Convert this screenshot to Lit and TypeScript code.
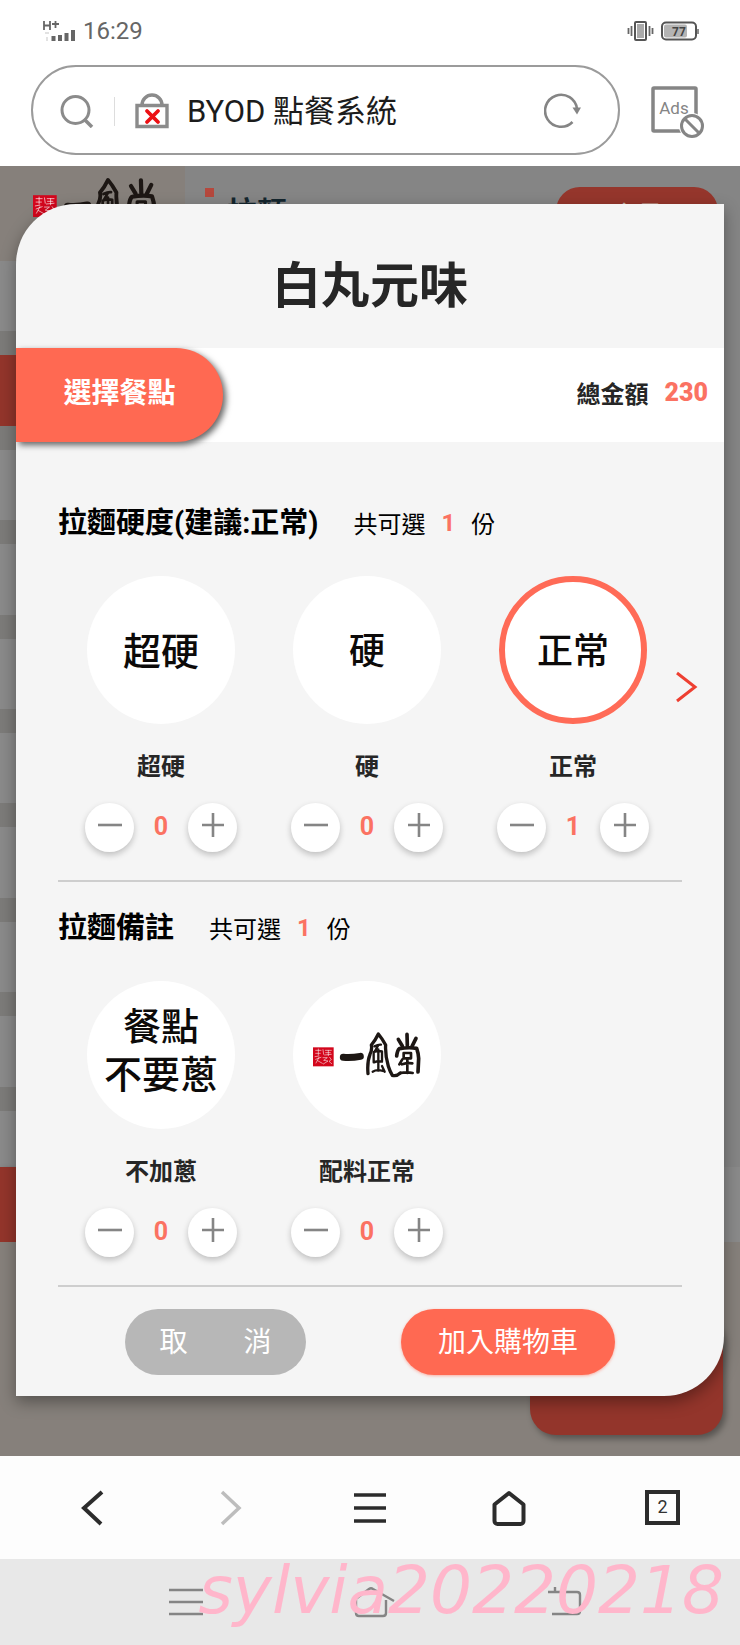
import { LitElement, html, css, svg, nothing } from "lit";
import { customElement, property, state } from "lit/decorators.js";
import { classMap } from "lit/directives/class-map.js";

const brandLogo = html`<svg viewBox="36 36 324 138" aria-label="一風堂" role="img">
  <rect x="36" y="82" width="62" height="57" fill="#d3061c" />
  <g fill="none" stroke="#fff" stroke-opacity="0.7" stroke-width="2.400" stroke-linecap="round">
    <path d="M44 91h16M52 87v18M44 100h14M66 89l2 14M73 91h18M74 98h14M82 91v16M71 105l20-2" />
    <path d="M42 110l12-2M44 118l16-6M54 112l-9 17M50 122l14 8M66 113h13l-11 8 13 2-14 9M86 112l5 7-7 5 8 7" />
  </g>
  <g fill="none" stroke="#1d1714" stroke-linecap="round" stroke-linejoin="round">
    <path d="M127 112q26 2 51-3" stroke-width="21" />
    <path d="M201 161q-3-36 6-58 7-14 4-28 12-14 21-33 11 13 22 33-2 30 8 64 5 16 12 27 12 4 24-7" stroke-width="10" />
    <path d="M220 79q12-6 20-5M231 77l-9 16M218 96v31M219 96q13-5 24-2v30M219 127q12-5 24-2M232 88v64M215 155q13-8 31-2M243 138l8 17" stroke-width="7" />
    <path d="M318 43l1 34M292 58l12 20M345 55l-12 24" stroke-width="11" />
    <path d="M287 108q2-17 8-22 28-5 52-1 5 14 6 30l-2 41" stroke-width="11" />
    <path d="M308 99h22v16h-22zM319 117v42M303 133q16-5 31-3M297 159q22-4 38 0M304 118l-9 15" stroke-width="8" />
  </g>
</svg>`;

const icons = {
  minus: svg`<svg viewBox="0 0 24 24"><path d="M0 12h24" stroke="#858585" stroke-width="2.600" /></svg>`,
  plus: svg`<svg viewBox="0 0 24 24"><path d="M1 12h22M12 0v24" stroke="#858585" stroke-width="2.600" /></svg>`,
  next: svg`<svg viewBox="0 0 22 32"><path d="M1 2l18 14L1 30" fill="none" stroke="#ee3f31" stroke-width="3" /></svg>`,
};

interface Choice {
  label: string;
  lines?: string[];
  compact?: boolean;
  count: number;
}

@customElement("menu-choice")
class MenuChoice extends LitElement {
  @property({ attribute: false }) choice!: Choice;

  static styles = css`
    :host { display: flex; flex-direction: column; align-items: center; }
    .disc {
      box-sizing: border-box; width: 148px; height: 148px; padding: 4px 0 0;
      display: flex; flex-direction: column; align-items: center; justify-content: center;
      border: 0; border-radius: 50%; background: #fff; color: #0c0a09;
      font: 500 38px/48px Roboto, "Noto Sans CJK TC", sans-serif;
    }
    .disc.compact { font-size: 36px; }
    .disc.stacked { padding: 0 0 8px; }
    .disc.brand { padding: 0; }
    .disc.selected { border: 6px solid #ff6b57; }
    .disc svg { width: 108px; height: 46px; }
    .name { margin: 23px 0 20px; font-size: 24px; line-height: 36px; font-weight: 700; color: #262626; }
    .stepper { display: flex; align-items: center; }
    .step {
      width: 49px; height: 49px; padding: 0 0 5px; border: 0; border-radius: 50%;
      display: grid; place-items: center; background: #fff;
      box-shadow: 0 3px 6px rgba(0, 0, 0, 0.22);
    }
    .step svg { width: 24px; height: 24px; }
    .count { width: 54px; padding-bottom: 2px; text-align: center; font: 700 25px/36px Roboto, sans-serif; color: #fb7262; }
  `;

  private change(delta: number) {
    this.choice.count = Math.max(0, this.choice.count + delta);
    this.requestUpdate();
  }

  render() {
    const { label, lines, compact, count } = this.choice;
    const discClasses = {
      disc: true,
      compact: !!compact,
      brand: !lines,
      stacked: (lines?.length ?? 0) > 1,
      selected: count > 0,
    };
    return html`
      <button class=${classMap(discClasses)} aria-label=${label}>
        ${lines ? lines.map((line) => html`<span>${line}</span>`) : brandLogo}
      </button>
      <div class="name">${label}</div>
      <div class="stepper">
        <button class="step" aria-label="減少" @click=${() => this.change(-1)}>${icons.minus}</button>
        <output class="count">${count}</output>
        <button class="step" aria-label="增加" @click=${() => this.change(1)}>${icons.plus}</button>
      </div>
    `;
  }
}

@customElement("choice-section")
class ChoiceSection extends LitElement {
  @property() heading = "";
  @property({ type: Boolean }) more = false;
  @property({ attribute: false }) choices: Choice[] = [];

  static styles = css`
    :host { display: block; padding: 25px 26px 0 42px; }
    .head { display: flex; align-items: center; gap: 35px; height: 42px; margin-bottom: 32px; color: #000; }
    h2 { margin: 0; font: 700 29px/42px Roboto, "Noto Sans CJK TC", sans-serif; }
    .limit { display: flex; gap: 16px; font-size: 24px; line-height: 36px; }
    .limit b { font-family: Roboto, sans-serif; font-weight: 700; color: #fb7262; }
    .row { display: grid; grid-template-columns: 1fr 22px; align-items: start; }
    .list { display: grid; grid-template-columns: repeat(3, 1fr); }
    .next { padding: 95px 0; border: 0; background: none; display: grid; }
    .next svg { width: 22px; height: 32px; }
    hr { margin: 28px 16px 0 0; border: 0; height: 2px; background: #cecece; }
  `;

  render() {
    return html`
      <div class="head">
        <h2>${this.heading}</h2>
        <div class="limit"><span>共可選</span><b>1</b><span>份</span></div>
      </div>
      <div class="row">
        <div class="list">
          ${this.choices.map((c) => html`<menu-choice .choice=${c}></menu-choice>`)}
        </div>
        ${this.more ? html`<button class="next" aria-label="下一頁">${icons.next}</button>` : nothing}
      </div>
      <hr />
    `;
  }
}

@customElement("app-root")
class AppRoot extends LitElement {
  @state() private hardness: Choice[] = [
    { label: "超硬", lines: ["超硬"], count: 0 },
    { label: "硬", lines: ["硬"], compact: true, count: 0 },
    { label: "正常", lines: ["正常"], compact: true, count: 1 },
  ];
  @state() private notes: Choice[] = [
    { label: "不加蔥", lines: ["餐點", "不要蔥"], count: 0 },
    { label: "配料正常", count: 0 },
  ];

  static styles = css`
    :host {
      display: flex; flex-direction: column; min-height: 100vh; background: #fff;
      font-family: "Noto Sans CJK TC", sans-serif;
    }
    button { font-family: inherit; cursor: pointer; }
    svg { display: block; flex: none; }

    .status {
      display: flex; align-items: center; gap: 7px; height: 36px; padding: 13px 41px 0 42px;
      font: 24px/36px Roboto, sans-serif; color: #666;
    }
    .signal { width: 34px; height: 24px; }
    .vibrate { width: 27px; height: 22px; margin-left: auto; }
    .battery { width: 38px; height: 20px; }

    .browser { display: flex; align-items: center; gap: 31px; padding: 16px 35px 11px 31px; }
    .address {
      flex: 1; min-width: 0; box-sizing: border-box; height: 90px; padding: 2px 37px 0 27px;
      display: flex; align-items: center; border: 2px solid #9b9b9b; border-radius: 45px;
    }
    .search { width: 34px; height: 34px; }
    .rule { width: 1px; height: 29px; margin: 0 20px; background: #ddd; }
    .lock { width: 34px; height: 36px; }
    .address input {
      flex: 1; min-width: 0; margin-left: 18px; padding: 2px 0 0; border: 0; outline: 0; background: none;
      font: 31px/44px Roboto, "Noto Sans CJK TC", sans-serif; color: #1c1c1c;
    }
    .plain { padding: 0; border: 0; background: none; display: grid; place-items: center; }
    .reload { width: 37px; height: 36px; }
    .block-ads { padding-top: 4px; }
    .ads { width: 54px; height: 54px; }
    .ads text { font: 17px Roboto, sans-serif; fill: #858585; }

    .stage { flex: 1; display: grid; grid-template: 1fr / 1fr; background: #858585; }
    .shop, .dialog { grid-area: 1 / 1; min-width: 0; }
    .shop { display: flex; flex-direction: column; overflow: hidden; }
    .shop-head { display: flex; height: 95px; flex: none; }
    .shop-brand { box-sizing: border-box; width: 185px; padding: 11px 0 0 33px; background: #86807b; }
    .shop-brand svg { width: 124px; height: 54px; }
    .shop-tab { display: flex; padding: 22px 0 0 20px; gap: 13px; font-size: 30px; line-height: 44px; font-weight: 700; color: #14262e; }
    .shop-tab i { width: 9px; height: 9px; background: #b5483d; }
    .shop-member {
      width: 162px; height: 58px; margin: 21px 22px 0 auto; padding: 0 0 4px; border: 0; border-radius: 24px;
      background: #95362c; color: #c9b5a8; font-size: 26px; line-height: 40px;
    }
    .shop-list { flex: 1; width: 185px; display: flex; flex-direction: column; gap: 24px; background: #7c7b79; }
    .shop-list div { flex: 1; background: #8a8a8a; }
    .shop-list .active { background: #93352b; }
    .shop-list .cut { flex: 0.8; }
    .shop-bar { height: 75px; background: #8a8a8a; }
    .shop-bar div { width: 185px; height: 75px; background: #93352b; box-shadow: 2px 3px 6px rgba(0, 0, 0, 0.4); }
    .shop-foot { display: flex; justify-content: flex-end; align-items: flex-end; height: 193px; padding: 0 17px 21px; background: #86807b; }
    .shop-cart { width: 193px; height: 120px; border-radius: 26px; background: #93352b; box-shadow: 3px 4px 6px rgba(0, 0, 0, 0.35); }

    .dialog {
      z-index: 1; margin: 38px 16px 60px; display: flex; flex-direction: column; overflow: hidden;
      border-radius: 60px 0 60px 0; background: #f5f5f5;
      box-shadow: 0 6px 16px rgba(0, 0, 0, 0.36);
    }
    h1 { margin: 0; padding: 42px 0 30px; text-align: center; font-size: 49px; line-height: 72px; font-weight: 700; color: #262626; }
    .summary { display: flex; align-items: center; justify-content: space-between; height: 94px; padding-right: 16px; background: #fff; }
    .pick {
      width: 207px; height: 94px; padding: 0 0 8px; border: 0; border-radius: 0 47px 47px 0; background: #ff6952; color: #fff;
      font-size: 28px; line-height: 42px; font-weight: 700; box-shadow: 3px 3px 6px rgba(0, 0, 0, 0.6);
    }
    .total { display: flex; align-items: center; gap: 16px; padding-bottom: 4px; font-size: 24px; line-height: 36px; font-weight: 700; color: #262626; }
    .total b { font-family: Roboto, sans-serif; font-size: 25px; color: #fb7262; }
    .sections { flex: 1; padding: 35px 0 2px; }
    .actions { display: flex; justify-content: space-between; padding: 20px 109px 21px; }
    .action { height: 66px; padding: 0 0 4px; border: 0; border-radius: 33px; color: #fff; font-size: 28px; line-height: 42px; }
    .cancel { width: 181px; background: #b7b7b7; }
    .add { width: 214px; background: #ff6952; box-shadow: 0 1px 3px rgba(255, 105, 82, 0.5); }

    .toolbar { display: flex; align-items: center; justify-content: space-between; height: 103px; padding: 0 60px 0 72px; background: #fdfdfd; }
    .toolbar .plain { width: 40px; height: 48px; }
    .toolbar svg { width: 36px; height: 36px; }
    .toolbar .tabs { width: 52px; justify-items: end; }
    .tabs span {
      box-sizing: border-box; width: 35px; height: 35px; border: 4px solid #2c2c2c; color: #333;
      font: 18px/26px Roboto, sans-serif; text-align: center;
    }

    .system { position: relative; display: grid; grid-template-columns: repeat(3, 1fr); align-items: center; height: 86px; padding: 0 82px 0 92px; background: #e8e8e8; }
    .system svg { width: 44px; height: 32px; }
    .signature {
      position: absolute; right: 16px; top: 0; pointer-events: none; white-space: nowrap;
      font: italic 66px/64px "DejaVu Sans", sans-serif; color: #ffb6cb;
    }
  `;

  render() {
    return html`
      <div class="status">
        <svg class="signal" viewBox="0 0 34 24">
          <path d="M2 2v9M8 2v9M2 6.500h6M10 5h7M13.500 2v7" fill="none" stroke="#666" stroke-width="1.800" />
          <path d="M3 14h4M5 18v4" stroke="#e2e2e2" stroke-width="2" fill="none" />
          <path d="M11.500 22v-5M18 22v-6M24.500 22v-8M31 22V11" stroke="#666" stroke-width="4" />
        </svg>
        <span>16:29</span>
        <svg class="vibrate" viewBox="0 0 27 22">
          <rect x="8" y="2" width="11" height="18" rx="1" fill="#fff" stroke="#555" stroke-width="2" />
          <rect x="10" y="4" width="7" height="14" fill="#aaa" />
          <path d="M4.500 6v10M1.500 8v6M22.500 6v10M25.500 8v6" stroke="#666" stroke-width="1.800" />
        </svg>
        <svg class="battery" viewBox="0 0 38 20">
          <rect x="1" y="1.500" width="34" height="17" rx="4" fill="#fff" stroke="#555" stroke-width="2" />
          <rect x="3" y="3.500" width="23" height="13" rx="2" fill="#b4b4b4" />
          <path d="M37 8v5" stroke="#666" stroke-width="1.500" />
          <text x="18" y="14.500" text-anchor="middle" font-size="12" font-weight="700" fill="#444">77</text>
        </svg>
      </div>

      <div class="browser">
        <div class="address">
          <svg class="search" viewBox="0 0 34 34"><g fill="none" stroke="#8b8b8b" stroke-width="3"><circle cx="15.500" cy="16" r="13.500" /><path d="M24 25l8 8" stroke-width="3.500" /></g></svg>
          <span class="rule"></span>
          <svg class="lock" viewBox="0 0 34 36">
            <path d="M2 12.500h30v21H2zM7 12a10 10 0 0 1 20 0" fill="none" stroke="#8b8b8b" stroke-width="3.400" />
            <path d="M12 18l11 11M23 18L12 29" stroke="#ec1014" stroke-width="3.800" stroke-linecap="round" />
          </svg>
          <input type="text" aria-label="網址列" value="BYOD 點餐系統" />
          <button class="plain" aria-label="重新整理">
            <svg class="reload" viewBox="0 0 37 36">
              <path d="M33 16A16 16 0 1 0 28.500 29" fill="none" stroke="#858585" stroke-width="2.600" />
              <path d="M28.500 14.500h8.500l-4 7z" fill="#858585" />
            </svg>
          </button>
        </div>
        <button class="plain block-ads" aria-label="封鎖廣告">
          <svg class="ads" viewBox="0 0 54 54">
            <rect x="2" y="3" width="43" height="43" rx="1" fill="none" stroke="#858585" stroke-width="3.500" />
            <text x="23" y="29" text-anchor="middle">Ads</text>
            <circle cx="41" cy="41" r="13" fill="#fff" />
            <circle cx="41" cy="41" r="10.500" fill="#fff" stroke="#858585" stroke-width="3" />
            <path d="M34 34l14 14" stroke="#858585" stroke-width="3" />
          </svg>
        </button>
      </div>

      <main class="stage">
        <div class="shop" aria-hidden="true">
          <div class="shop-head">
            <div class="shop-brand">${brandLogo}</div>
            <div class="shop-tab"><i></i><span>拉麵</span></div>
            <button class="shop-member">會員</button>
          </div>
          <div class="shop-list">
            ${Array.from({ length: 10 }, (_, i) => html`<div class=${classMap({ active: i === 1, cut: i === 9 })}></div>`)}
          </div>
          <div class="shop-bar"><div></div></div>
          <div class="shop-foot"><div class="shop-cart"></div></div>
        </div>

        <section class="dialog" role="dialog" aria-label="白丸元味">
          <h1>白丸元味</h1>
          <div class="summary">
            <button class="pick">選擇餐點</button>
            <div class="total"><span>總金額</span><b>230</b></div>
          </div>
          <div class="sections">
            <choice-section heading="拉麵硬度(建議:正常)" more .choices=${this.hardness}></choice-section>
            <choice-section heading="拉麵備註" .choices=${this.notes}></choice-section>
          </div>
          <div class="actions">
            <button class="action cancel">取　　消</button>
            <button class="action add">加入購物車</button>
          </div>
        </section>
      </main>

      <nav class="toolbar">
        <button class="plain" aria-label="上一頁"><svg viewBox="0 0 36 36"><path d="M28 2L10 18l17 16" fill="none" stroke="#2c2c2c" stroke-width="4" /></svg></button>
        <button class="plain" aria-label="下一頁"><svg viewBox="0 0 36 36"><path d="M9 2l17 16L9 34" fill="none" stroke="#bdbdbd" stroke-width="3.500" /></svg></button>
        <button class="plain" aria-label="選單"><svg viewBox="0 0 36 36"><path d="M2 5h32M2 18h32M2 31h32" stroke="#2c2c2c" stroke-width="3.600" /></svg></button>
        <button class="plain" aria-label="首頁"><svg viewBox="0 0 36 36"><path d="M3.500 14.500L18 3l14.500 11.500V31a3 3 0 0 1-3 3h-23a3 3 0 0 1-3-3z" fill="none" stroke="#2c2c2c" stroke-width="4" stroke-linejoin="round" /></svg></button>
        <button class="plain tabs" aria-label="分頁"><span>2</span></button>
      </nav>

      <footer class="system">
        <button class="plain" aria-label="最近"><svg viewBox="0 0 44 32"><path d="M5 4h34M5 16h34M5 28h34" stroke="#858585" stroke-width="2.400" /></svg></button>
        <button class="plain" aria-label="主畫面"><svg viewBox="0 0 44 32"><path d="M0 15L16 3q2-1.500 4 0l21 12M3 14v13q0 3 3 3h24q3 0 3-3V14" fill="none" stroke="#858585" stroke-width="2.400" /></svg></button>
        <button class="plain" aria-label="返回"><svg viewBox="0 0 44 32"><path d="M10 28h25q3 0 3-3V9q0-3-3-3H6M13 1v5" fill="none" stroke="#858585" stroke-width="2.400" /></svg></button>
        <span class="signature">sylvia20220218</span>
      </footer>
    `;
  }
}
